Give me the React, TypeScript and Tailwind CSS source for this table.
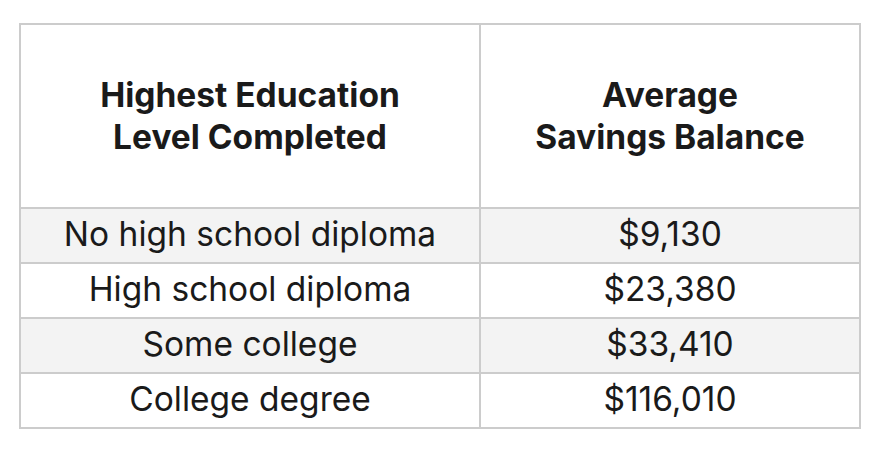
const rows = [
  { level: 'No high school diploma', balance: '$9,130' },
  { level: 'High school diploma', balance: '$23,380' },
  { level: 'Some college', balance: '$33,410' },
  { level: 'College degree', balance: '$116,010' },
];

export default function App() {
  return (
    <div className="w-[884px] h-[452px] bg-white pt-[23px] pl-[19px] font-['Inter',sans-serif] text-[#1a1a1a]">
      <table className="border-collapse w-[840px] table-fixed">
        <colgroup>
          <col className="w-[460px]" />
          <col className="w-[380px]" />
        </colgroup>
        <thead>
          <tr className="h-[184px]">
            <th className="border-2 border-[#cccccc] text-[33.5px] leading-[42px] font-bold text-center align-middle">
              Highest Education
              <br />
              Level Completed
            </th>
            <th className="border-2 border-[#cccccc] text-[33.5px] leading-[42px] font-bold text-center align-middle">
              Average
              <br />
              Savings Balance
            </th>
          </tr>
        </thead>
        <tbody>
          {rows.map((r, i) => (
            <tr key={r.level} className={`h-[55px] ${i % 2 === 0 ? 'bg-[#f3f3f3]' : 'bg-white'}`}>
              <td className="border-2 border-[#cccccc] text-[33.5px] leading-[40px] text-center align-middle p-0 pb-[4px]">{r.level}</td>
              <td className="border-2 border-[#cccccc] text-[33.5px] leading-[40px] text-center align-middle p-0 pb-[4px]">{r.balance}</td>
            </tr>
          ))}
        </tbody>
      </table>
    </div>
  );
}
